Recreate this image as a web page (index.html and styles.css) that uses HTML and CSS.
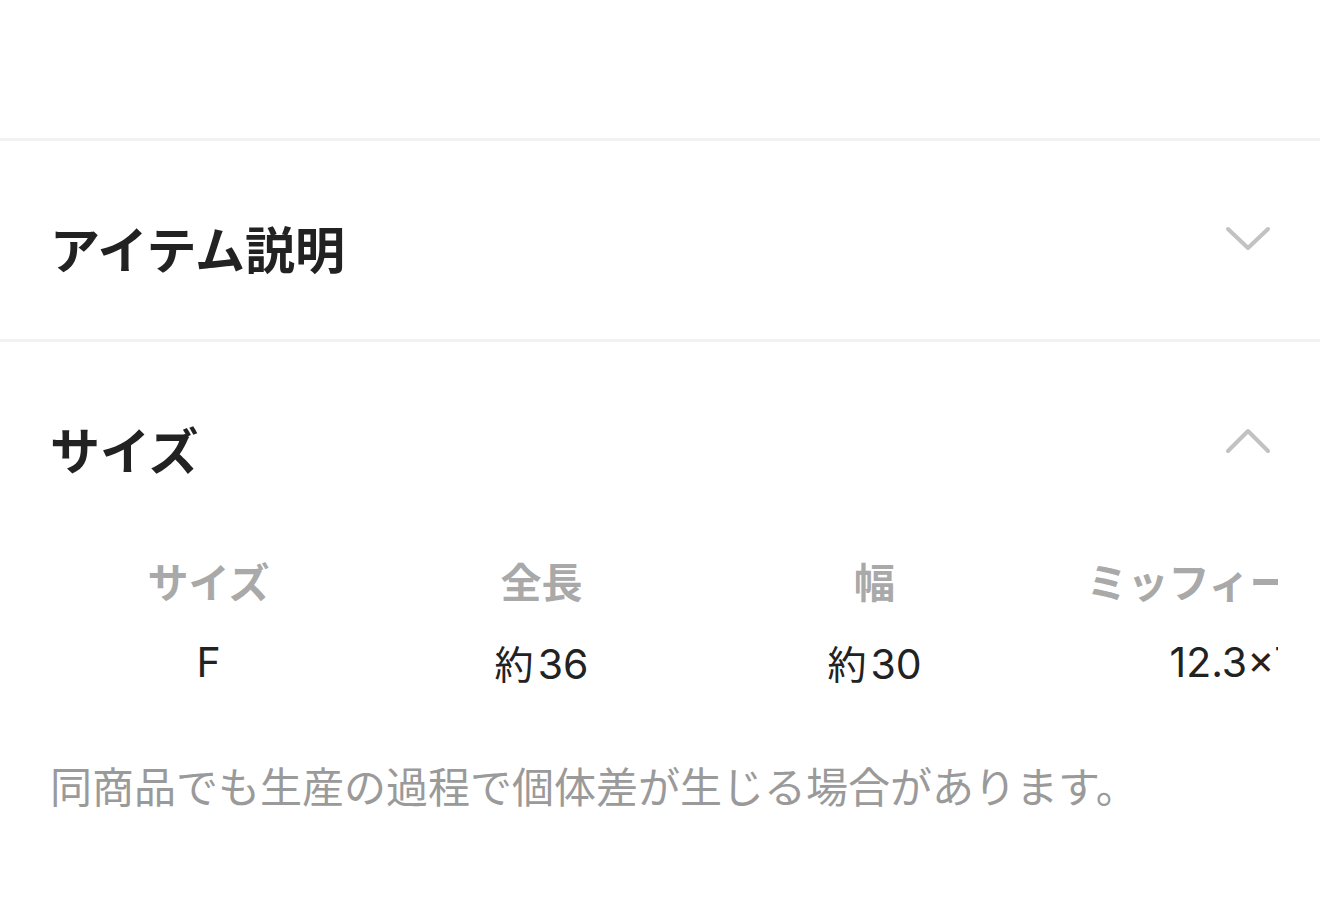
FILE: index.html
```html
<!DOCTYPE html>
<html lang="ja">
<head>
<meta charset="utf-8">
<title>アイテム詳細</title>
<link rel="stylesheet" href="styles.css">
</head>
<body>
<div class="page">
  <div class="top-space"></div>

  <section class="acc">
    <div class="acc-head">
      <h2 class="acc-title">アイテム説明</h2>
      <svg class="chev" viewBox="0 0 48 32" width="48" height="32" aria-hidden="true">
        <polyline points="4,7 24,26 44,7" fill="none" stroke="#c2c2c2" stroke-width="4" stroke-linecap="round" stroke-linejoin="round"/>
      </svg>
    </div>
  </section>

  <section class="acc open">
    <div class="acc-head">
      <h2 class="acc-title">サイズ</h2>
      <svg class="chev" viewBox="0 0 48 32" width="48" height="32" aria-hidden="true">
        <polyline points="4,28 24,8 44,28" fill="none" stroke="#c2c2c2" stroke-width="4" stroke-linecap="round" stroke-linejoin="round"/>
      </svg>
    </div>
    <div class="acc-body">
      <div class="size-grid">
        <div class="th">サイズ</div>
        <div class="th">全長</div>
        <div class="th">幅</div>
        <div class="th last"><span class="wide">ミッフィーサイズ</span></div>
        <div class="td">F</div>
        <div class="td"><span class="kanji">約</span>36</div>
        <div class="td"><span class="kanji">約</span>30</div>
        <div class="td last"><span class="wide">12.3×7.5</span></div>
      </div>
      <p class="note">同商品でも生産の過程で個体差が生じる場合があります。</p>
    </div>
  </section>
</div>
</body>
</html>
```

FILE: styles.css
```css
* { box-sizing: border-box; }

html, body {
  margin: 0;
  padding: 0;
  background: #ffffff;
}

body {
  font-family: "Noto Sans CJK JP", "Noto Sans", sans-serif;
  color: #222222;
}

.page {
  width: 1320px;
  height: 906px;
  overflow: hidden;
}

.top-space {
  height: 138px;
}

.acc {
  border-top: 3px solid #f2f2f2;
}

.acc-head {
  display: flex;
  justify-content: space-between;
  align-items: flex-start;
  height: 198px;
  padding: 81px 48px 0 50px;
}

.acc.open .acc-head {
  height: auto;
}

.acc-title {
  margin: 0;
  font-size: 50px;
  line-height: 50px;
  font-weight: 700;
  color: #222222;
}

.chev {
  display: block;
}

.acc-body {
  padding: 83px 0 0 0;
}

.size-grid {
  display: grid;
  grid-template-columns: 333px 333px 333px 237px;
  row-gap: 34px;
  margin: 0 42px;
  white-space: nowrap;
}

.th {
  text-align: center;
  font-size: 41px;
  line-height: 48px;
  font-weight: 700;
  color: #a9a9a9;
}

.td {
  text-align: center;
  font-family: "Inter", "Noto Sans CJK JP", sans-serif;
  font-size: 41px;
  line-height: 48px;
  color: #222222;
}

.last {
  overflow: hidden;
}

.wide {
  display: block;
  width: 416px;
  text-align: center;
}

.kanji {
  font-family: "Noto Sans CJK JP", sans-serif;
  font-size: 39px;
  margin-right: 4px;
}

.note {
  margin: 73px 0 0 50px;
  font-size: 42px;
  line-height: 48px;
  color: #9a9a9a;
}
```
